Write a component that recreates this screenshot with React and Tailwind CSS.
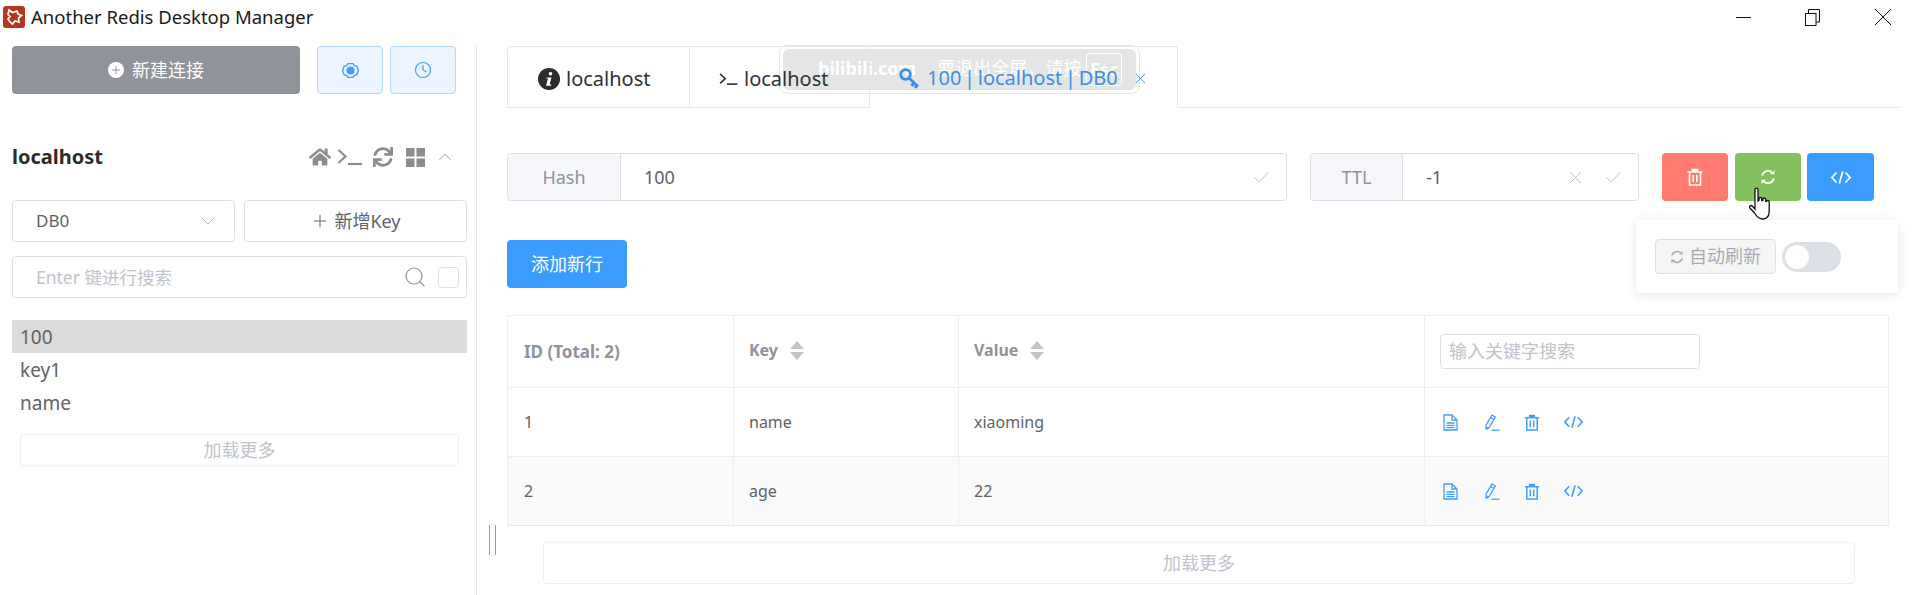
import React from 'react';
import { FaHome, FaSync } from 'react-icons/fa';
import { ChevronDown, ChevronUp, Plus, Search, Check, X, Clock } from 'lucide-react';

const font = { fontFamily: '"Noto Sans", "Noto Sans CJK SC", sans-serif' };

const rows = [
  { id: 1, key: 'name', value: 'xiaoming' },
  { id: 2, key: 'age', value: '22' },
];

const TerminalIcon = ({ className }) => (
  <svg viewBox="0 0 26 18" className={className} fill="none" stroke="currentColor" strokeWidth="2.2">
    <path d="M1.5 2l7 6.5-7 6.5" />
    <path d="M11 16h14" />
  </svg>
);

const KeyIcon = ({ className }) => (
  <svg viewBox="0 0 21 21" className={className} fill="none" stroke="currentColor" strokeWidth="2.800">
    <circle cx="6.500" cy="6.500" r="4.800" />
    <path d="M10 10l9 8.500M15 15l-2.500 2.800M18 17.500l-2 2.200" />
  </svg>
);

const TrashIcon = ({ className }) => (
  <svg viewBox="0 0 16 18" className={className} fill="none" stroke="currentColor" strokeWidth="1.6">
    <path d="M.5 4h15M5.500 4V1.500h5V4M2.500 4v13h11V4M6.200 7v7M9.800 7v7" />
    <path d="M5.500 1.500h5L11 4H5z" fill="currentColor" stroke="none" />
  </svg>
);

const CodeIcon = ({ className }) => (
  <svg viewBox="0 0 20 14" className={className} fill="none" stroke="currentColor" strokeWidth="1.7">
    <path d="M5.500 2L1 7l4.500 5M14.500 2L19 7l-4.500 5M11.700 1L8.300 13" />
  </svg>
);

const PenIcon = ({ className }) => (
  <svg viewBox="0 0 16 17" className={className} fill="none" stroke="currentColor" strokeWidth="1.3">
    <path d="M8 1l3.300 2-5.800 10-2.800 2.200-.9-.5.300-3.700z" />
    <path d="M6.500 3.500l3.300 2M2.800 13l2 1.200" />
    <path d="M7.500 16.200h8" />
  </svg>
);

const FileIcon = ({ className }) => (
  <svg viewBox="0 0 15 17" className={className} fill="none" stroke="currentColor" strokeWidth="1.3">
    <path d="M1 1h8l5 5v10H1z" />
    <path d="M9 1v5h5" />
    <path d="M3.500 9h8M3.500 11.300h8M3.500 13.600h8" />
  </svg>
);

const RefreshIcon = ({ className }) => (
  <svg viewBox="0 0 16 16" className={className} fill="none" stroke="currentColor" strokeWidth="1.8">
    <path d="M2.200 6.500A6 6 0 0 1 12.500 3.800" />
    <path d="M13.800 9.500A6 6 0 0 1 3.500 12.200" />
    <path d="M14.500 1v4.200h-4.200z" fill="currentColor" stroke="none" />
    <path d="M1.500 15v-4.200h4.200z" fill="currentColor" stroke="none" />
  </svg>
);

const RowActions = () => (
  <div className="flex items-center text-[#409eff]">
    <FileIcon className="w-[15px] h-[17px] mr-[26px]" />
    <PenIcon className="w-[16px] h-[17px] mr-[24px]" />
    <TrashIcon className="w-[16px] h-[17px] mr-[24px]" />
    <CodeIcon className="w-[19px] h-[14px]" />
  </div>
);

const SortCaret = () => (
  <svg viewBox="0 0 16 19" className="w-[16px] h-[19px] ml-[11px] text-[#c0c4cc]" fill="currentColor">
    <path d="M8 0l7 8H1zM8 19l-7-8h14z" />
  </svg>
);

export default function App() {
  return (
    <div style={font} className="relative w-[1920px] h-[595px] overflow-hidden bg-white text-[#606266]">
      {/* title bar */}
      <div className="flex items-center h-[46px] pb-[12px] pl-[3px]">
        <svg viewBox="0 0 22 22" className="w-[22px] h-[22px]">
          <rect width="22" height="22" rx="3" fill="#b5371f" />
          <path d="M6 4l3.500 2.500L14 5l1 3 3.500 1.500-3 2.500.5 4-4-1-2.500 3-2.500-2-2-3 2-2.500-2-2z" fill="none" stroke="#fff" strokeWidth="1.7" />
        </svg>
        <span className="ml-[6px] text-[18.500px] leading-none text-[#1a1a1a]">Another Redis Desktop Manager</span>
        <div className="flex items-center ml-auto text-[#111]">
          <svg viewBox="0 0 15 15" className="w-[15px] h-[15px] mr-[54px]" fill="none" stroke="currentColor">
            <path d="M0 7.500h15" />
          </svg>
          <svg viewBox="0 0 15 17" className="w-[15px] h-[17px] mr-[55px]" fill="none" stroke="currentColor">
            <rect x="0.500" y="4.500" width="10.500" height="12" />
            <path d="M3.500 4.500V0.500H14.500V13H11" />
          </svg>
          <svg viewBox="0 0 16 16" className="w-[16px] h-[16px] mr-[29px]" fill="none" stroke="currentColor">
            <path d="M0 0l16 16M16 0L0 16" />
          </svg>
        </div>
      </div>

      <div className="flex h-[549px]">
        {/* sidebar */}
        <aside className="w-[477px] h-full shrink-0 border-r border-[#e4e7ed] pl-[12px] pr-[9px]">
          <div className="flex items-center">
            <button className="flex items-center justify-center w-[288px] h-[48px] rounded bg-[#909399] text-white text-[18px]">
              <span className="flex items-center justify-center w-[16px] h-[16px] mr-[8px] rounded-full bg-white text-[#909399]">
                <Plus size={12} strokeWidth={2} />
              </span>
              新建连接
            </button>
            <button className="flex items-center justify-center w-[66px] h-[48px] ml-[17px] rounded border border-[#b3d8ff] bg-[#ecf5ff] text-[#409eff]">
              <svg viewBox="0 0 16 16" className="w-[17px] h-[17px]" fill="none" stroke="currentColor" strokeWidth="1.300">
                <path d="M5.500 1.500h5l1 1.800 2.500.7 1.500 4-1.500 4-2.500.7-1 1.800h-5l-1-1.800-2.500-.7L.5 8 2 4l2.500-.7z" />
                <circle cx="8" cy="8" r="3.800" fill="currentColor" stroke="none" />
              </svg>
            </button>
            <button className="flex items-center justify-center w-[66px] h-[48px] ml-[7px] rounded border border-[#b3d8ff] bg-[#ecf5ff] text-[#409eff]">
              <Clock size={18} strokeWidth={1.6} />
            </button>
          </div>

          <div className="flex items-center h-[28px] mt-[49px]">
            <span className="text-[20px] font-bold text-[#2c2c2c]">localhost</span>
            <div className="flex items-center ml-auto mr-[11px] text-[#8a8c90]">
              <FaHome className="w-[22px] h-[20px]" />
              <TerminalIcon className="w-[26px] h-[18px] ml-[6px]" />
              <FaSync className="w-[20px] h-[20px] ml-[10px]" />
              <svg viewBox="0 0 19 19" className="w-[19px] h-[19px] ml-[13px]" fill="currentColor">
                <rect width="8.500" height="8.500" />
                <rect x="10.500" width="8.500" height="8.500" />
                <rect y="10.500" width="8.500" height="8.500" />
                <rect x="10.500" y="10.500" width="8.500" height="8.500" />
              </svg>
              <ChevronUp size={22} strokeWidth={1} className="ml-[9px] text-[#909399]" />
            </div>
          </div>

          <div className="flex mt-[29px]">
            <div className="flex items-center w-[223px] h-[42px] pl-[23px] pr-[14px] rounded border border-[#dcdfe6] text-[17px]">
              DB0
              <ChevronDown size={24} strokeWidth={1} className="ml-auto text-[#b4b8c0]" />
            </div>
            <button className="flex items-center justify-center w-[223px] h-[42px] ml-[9px] rounded border border-[#dcdfe6] text-[18px]">
              <Plus size={20} strokeWidth={1.2} className="mr-[4px]" />
              新增Key
            </button>
          </div>

          <div className="flex items-center w-[455px] h-[42px] mt-[14px] pl-[23px] pr-[7px] rounded border border-[#dcdfe6] text-[17.500px] text-[#c0c4cc]">
            Enter 键进行搜索
            <Search size={24} strokeWidth={1.2} className="ml-auto text-[#909399]" />
            <span className="w-[21px] h-[21px] ml-[11px] rounded-sm border border-[#dcdfe6]"></span>
          </div>

          <ul className="w-[455px] mt-[22px] text-[19px]">
            <li className="h-[33px] pl-[8px] leading-[35px] bg-[#dcdcdc]">100</li>
            <li className="h-[33px] pl-[8px] leading-[35px]">key1</li>
            <li className="h-[33px] pl-[8px] leading-[35px]">name</li>
          </ul>

          <button className="block w-[439px] h-[32px] ml-[8px] mt-[15px] rounded border border-[#ebeef5] text-[18px] text-[#c0c4cc]">加载更多</button>
        </aside>

        {/* main */}
        <main className="flex-1 min-w-0 pl-[30px] pr-[19px]">
          <div className="relative z-10 flex h-[62px] border-b border-[#e4e7ed]">
            <div className="flex w-[671px] -mb-px">
              <div className="flex items-center w-[183px] pl-[30px] pt-[2px] rounded-tl border-l border-t border-r border-[#e4e7ed] text-[20px] text-[#303133]">
                <svg viewBox="0 0 22 22" className="w-[22px] h-[22px] mr-[6px]">
                  <circle cx="11" cy="11" r="11" fill="#2c2c2c" />
                  <circle cx="12.500" cy="5.800" r="1.800" fill="#fff" />
                  <path d="M8.500 9.500h5l-1.800 6.500c-.1.500.4.600 1.600.3l-.3 1.400H8l1.900-6.800c.1-.5-.3-.6-1.700-.5z" fill="#fff" />
                </svg>
                localhost
              </div>
              <div className="flex items-center w-[179px] pl-[29px] pt-[2px] border-t border-[#e4e7ed] text-[20px] text-[#303133]">
                <TerminalIcon className="w-[19px] h-[14px] mr-[6px]" />
                localhost
              </div>
              <div className="flex items-center flex-1 pl-[29px] pt-[2px] rounded-t border-t border-l border-r border-[#e4e7ed] border-b border-b-white text-[20px] text-[#3a8ee6] whitespace-nowrap [word-spacing:-2.500px]">
                <KeyIcon className="w-[21px] h-[21px] mr-[7px]" />
                100 | localhost | DB0
                <X size={17} strokeWidth={1.2} className="ml-[14px]" />
              </div>
            </div>
          </div>

          <div className="flex items-stretch h-[48px] mt-[45px] text-[18px]">
            <div className="flex w-[780px] rounded border border-[#dcdfe6]">
              <span className="flex items-center justify-center w-[113px] rounded-l border-r border-[#dcdfe6] bg-[#f5f7fa] text-[#909399]">Hash</span>
              <span className="flex items-center flex-1 pl-[23px] pr-[14px]">
                100
                <Check size={21} strokeWidth={1} className="ml-auto text-[#b4b8c0]" />
              </span>
            </div>
            <div className="flex w-[329px] ml-[23px] rounded border border-[#dcdfe6]">
              <span className="flex items-center justify-center w-[92px] rounded-l border-r border-[#dcdfe6] bg-[#f5f7fa] text-[#909399]">TTL</span>
              <span className="flex items-center flex-1 pl-[23px] pr-[14px]">
                -1
                <X size={21} strokeWidth={1} className="ml-auto text-[#b4b8c0]" />
                <Check size={21} strokeWidth={1} className="ml-[17px] text-[#b4b8c0]" />
              </span>
            </div>
            <button className="flex items-center justify-center w-[66px] ml-[23px] rounded bg-[#ff7b6f] text-white">
              <TrashIcon className="w-[16px] h-[18px]" />
            </button>
            <button className="flex items-center justify-center w-[66px] ml-[7px] rounded bg-[#82c15d] text-white">
              <RefreshIcon className="w-[16px] h-[16px]" />
            </button>
            <button className="flex items-center justify-center w-[67px] ml-[6px] rounded bg-[#3a9cff] text-white">
              <CodeIcon className="w-[20px] h-[15px]" />
            </button>
          </div>

          <button className="block w-[120px] h-[48px] mt-[39px] rounded bg-[#3a9cff] text-white text-[18px]">添加新行</button>

          <table className="w-[1382px] mt-[27px] table-fixed border-collapse border border-[#ebeef5] border-b-[#e6e6f5] text-[16px]">
            <colgroup>
              <col className="w-[226px]" />
              <col className="w-[225px]" />
              <col className="w-[466px]" />
              <col />
            </colgroup>
            <thead>
              <tr className="h-[72px] text-[#909399] font-bold">
                <th className="pl-[16px] text-[17px] text-left border-r border-[#ebeef5]">ID (Total: 2)</th>
                <th className="pl-[15px] pb-[3px] text-left border-r border-[#ebeef5]">
                  <span className="flex items-center">Key<SortCaret /></span>
                </th>
                <th className="pl-[15px] pb-[3px] text-left border-r border-[#ebeef5]">
                  <span className="flex items-center">Value<SortCaret /></span>
                </th>
                <th className="pl-[15px] text-left font-normal">
                  <div className="flex items-center w-[260px] h-[35px] pl-[8px] rounded border border-[#dcdfe6] text-[18px] text-[#c0c4cc]">输入关键字搜索</div>
                </th>
              </tr>
            </thead>
            <tbody>
              {rows.map((row, index) => (
                <tr key={row.id} className={index === 1 ? 'h-[69px] border-t border-[#ebeef5] bg-[#fafafa]' : 'h-[69px] border-t border-[#ebeef5]'}>
                  <td className="pl-[16px] border-r border-[#ebeef5]">{row.id}</td>
                  <td className="pl-[15px] border-r border-[#ebeef5]">{row.key}</td>
                  <td className="pl-[15px] border-r border-[#ebeef5]">{row.value}</td>
                  <td className="pl-[18px]"><RowActions /></td>
                </tr>
              ))}
            </tbody>
          </table>

          <button className="block w-[1312px] h-[42px] ml-[36px] mt-[16px] rounded border border-[#ebeef5] text-[18px] text-[#c0c4cc]">加载更多</button>
        </main>
      </div>

      {/* splitter handle */}
      <div className="absolute left-[489px] top-[525px] w-[7px] h-[30px] border-x border-[#9a9a9a]"></div>

      {/* fullscreen hint, sits under the tab strip */}
      <div className="absolute left-[779px] top-[45px] w-[361px] h-[49px] p-[3px] rounded-lg border border-[#e4e6e5]">
        <div className="flex items-center h-full pl-[35px] rounded-md bg-[#e4e6e5] text-white text-[18px] font-bold">
          <span className="-mt-[2px]">bilibili.com</span>
          <span className="ml-[21px] -mt-[2px] font-normal">要退出全屏，请按</span>
          <span className="flex items-center justify-center w-[36px] h-[33px] ml-[5px] rounded border border-white">Esc</span>
        </div>
      </div>

      {/* auto refresh popover */}
      <div className="absolute left-[1636px] top-[220px] flex items-center w-[262px] h-[73px] pl-[19px] rounded bg-white shadow-[0_2px_12px_rgba(0,0,0,0.1)]">
        <button className="flex items-center justify-center w-[121px] h-[35px] rounded border border-[#dcdfe6] bg-[#f5f5f5] text-[18px] text-[#a8abb2]">
          <RefreshIcon className="w-[14px] h-[14px] mr-[5px]" />
          自动刷新
        </button>
        <span className="flex items-center w-[59px] h-[30px] ml-[6px] pl-[3px] rounded-full bg-[#dcdfe6]">
          <span className="w-[24px] h-[24px] rounded-full bg-white"></span>
        </span>
      </div>

      {/* mouse cursor */}
      <svg viewBox="0 0 24 34" className="absolute left-[1748px] top-[187px] w-[24px] h-[34px]" fill="#fff" stroke="#111" strokeWidth="1.300">
        <path d="M7 2.500c0-1.800 3-1.800 3 0V14l1-.6v-2c0-1.500 2.800-1.500 2.800 0v2l1 .2v-1.500c0-1.500 2.800-1.500 2.800 0v2.200l.8.2c0-1.500 2.800-1.300 2.800.3v8.700c0 4-1.500 8.500-6 8.500-5 0-7-3-9-6.500L1.800 21c-1-1.800 1.200-3.300 2.700-1.800L7 22z" />
      </svg>
    </div>
  );
}
